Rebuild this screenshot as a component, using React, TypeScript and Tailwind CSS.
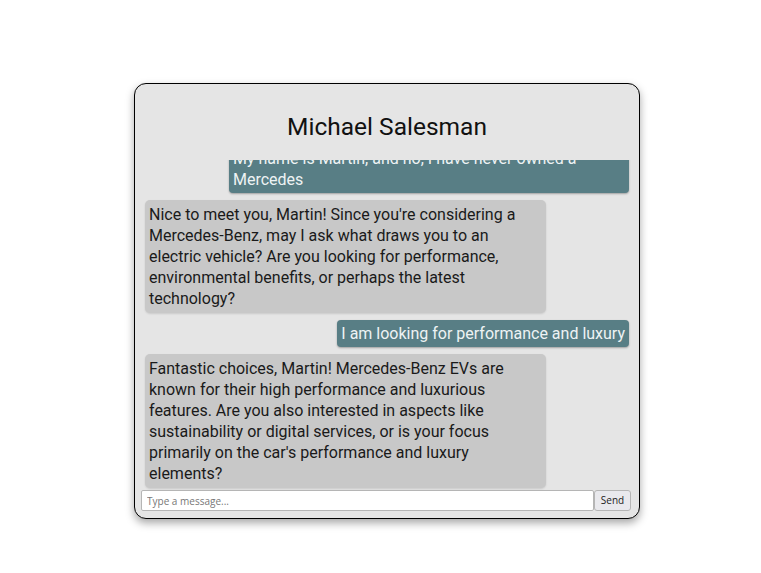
import React from "react";

const messages: { from: "user" | "bot"; text: string }[] = [
  { from: "bot", text: "Hello! I'm Michael, your Mercedes-Benz sales assistant. May I have your name, and have you owned a Mercedes before?" },
  { from: "user", text: "My name is Martin, and no, I have never owned a Mercedes" },
  {
    from: "bot",
    text: "Nice to meet you, Martin! Since you're considering a Mercedes-Benz, may I ask what draws you to an electric vehicle? Are you looking for performance, environmental benefits, or perhaps the latest technology?",
  },
  { from: "user", text: "I am looking for performance and luxury" },
  {
    from: "bot",
    text: "Fantastic choices, Martin! Mercedes-Benz EVs are known for their high performance and luxurious features. Are you also interested in aspects like sustainability or digital services, or is your focus primarily on the car's performance and luxury elements?",
  },
];

export default function App() {
  return (
    <div className="w-[761px] h-[573px] bg-white flex items-start pl-[134px] pt-[83px]">
      <div className="w-[506px] h-[436px] bg-[#e5e5e5] border-[1.5px] border-black rounded-[12px] shadow-[0_4px_8px_rgba(0,0,0,0.35)] flex flex-col pl-[6px] pr-[8px] pb-[7px] overflow-hidden">
        <div className="h-[76px] shrink-0 flex items-center justify-center pt-[10px] pl-[2px]">
          <h1 className="text-[24.5px] text-[#111] font-['Roboto',sans-serif] font-normal">Michael Salesman</h1>
        </div>
        <div className="flex-1 min-h-0 overflow-hidden flex flex-col justify-end gap-[7px] pl-[4px] pr-[2px] pb-[2px] font-['Roboto',sans-serif] text-[16px] leading-[21px]">
          {messages.map((m, i) =>
            m.from === "user" ? (
              <div key={i} className="self-end max-w-[400px] bg-[#587e85] text-[#eef3f4] rounded-[4px] px-[4px] py-[3px] shadow-[0_1px_2px_rgba(0,0,0,0.3)] shrink-0">
                {m.text}
              </div>
            ) : (
              <div key={i} className="self-start max-w-[401px] bg-[#c8c8c8] text-[#1a1a1a] rounded-[5px] px-[4px] py-[4px] shadow-[0_1px_2px_rgba(0,0,0,0.12)] shrink-0">
                {m.text}
              </div>
            )
          )}
        </div>
        <div className="flex h-[21px] shrink-0">
          <input
            className="flex-1 h-full bg-white border border-[#b5b5b5] rounded-[2px] px-[5px] text-[10px] font-['Open_Sans',sans-serif] placeholder:text-[#777] outline-none"
            placeholder="Type a message..."
          />
          <button className="w-[37px] h-full bg-[#e9e9ed] border border-[#b5b5b5] rounded-[3px] text-[10px] font-['Open_Sans',sans-serif] font-medium text-[#222]">
            Send
          </button>
        </div>
      </div>
    </div>
  );
}
